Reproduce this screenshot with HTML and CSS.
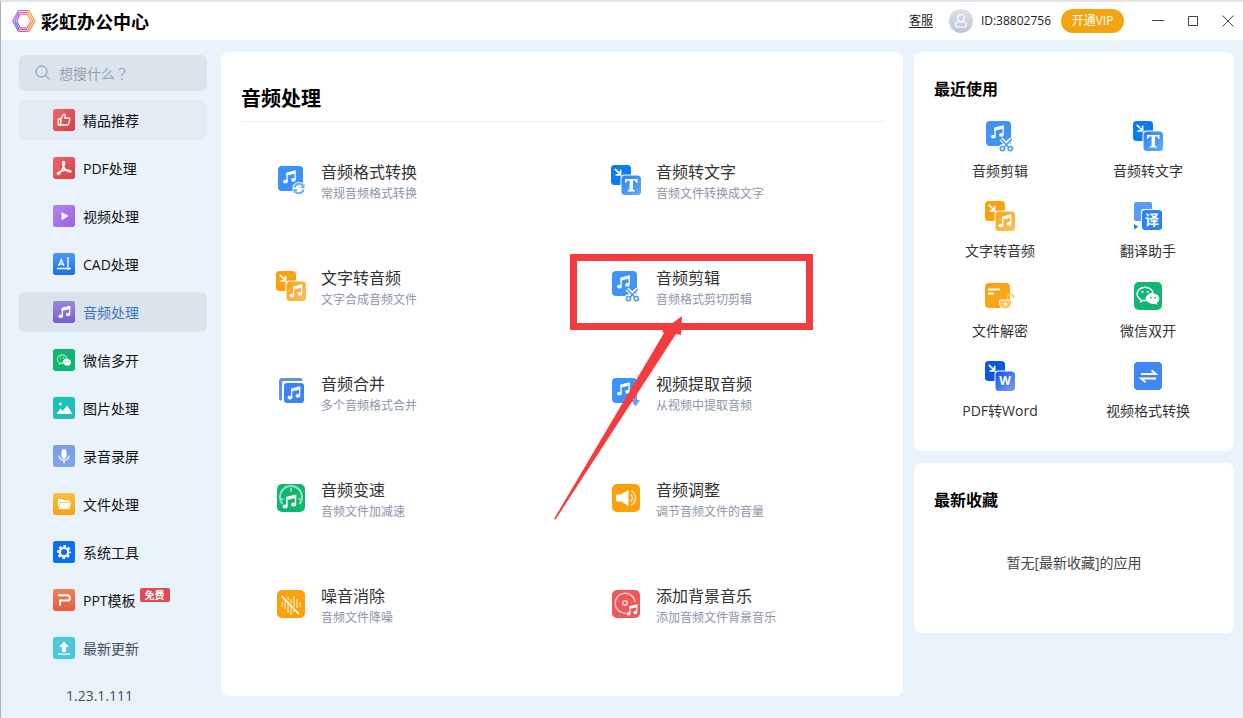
FILE: index.html
```html
<!DOCTYPE html>
<html lang="zh-CN">
<head>
<meta charset="utf-8">
<title>彩虹办公中心</title>
<link rel="stylesheet" href="styles.css">
</head>
<body>
<svg class="sprite" aria-hidden="true">
  <defs>
    <linearGradient id="g-red" x1="0" y1="0" x2="1" y2="1"><stop offset="0" stop-color="#ec6a6c"/><stop offset="1" stop-color="#d93c42"/></linearGradient>
    <linearGradient id="g-violet" x1="0" y1="0" x2="1" y2="1"><stop offset="0" stop-color="#b684f3"/><stop offset="1" stop-color="#9a63e2"/></linearGradient>
    <linearGradient id="g-blue" x1="0" y1="0" x2="0" y2="1"><stop offset="0" stop-color="#4d98f8"/><stop offset="1" stop-color="#1872e6"/></linearGradient>
    <linearGradient id="g-purple" x1="0" y1="0" x2="0" y2="1"><stop offset="0" stop-color="#9a85e4"/><stop offset="1" stop-color="#7a5fcb"/></linearGradient>
    <linearGradient id="g-teal" x1="0" y1="0" x2="0" y2="1"><stop offset="0" stop-color="#14c8b4"/><stop offset="1" stop-color="#2bb9bd"/></linearGradient>
    <linearGradient id="g-mic" x1="0" y1="0" x2="0" y2="1"><stop offset="0" stop-color="#7f9be6"/><stop offset="1" stop-color="#7aa7f0"/></linearGradient>
    <linearGradient id="g-folder" x1="0" y1="0" x2="0" y2="1"><stop offset="0" stop-color="#fcc23f"/><stop offset="1" stop-color="#f3a313"/></linearGradient>
    <linearGradient id="g-ppt" x1="0" y1="0" x2="0" y2="1"><stop offset="0" stop-color="#ee8257"/><stop offset="1" stop-color="#e2603f"/></linearGradient>
    <linearGradient id="g-front" x1="0" y1="0" x2="1" y2="1"><stop offset="0" stop-color="#2884f3"/><stop offset="1" stop-color="#68a8f8"/></linearGradient>
    <linearGradient id="g-orange" x1="0" y1="0" x2="1" y2="1"><stop offset="0" stop-color="#fba415"/><stop offset="1" stop-color="#fdbf5c"/></linearGradient>
    <linearGradient id="g-word" x1="0" y1="0" x2="1" y2="1"><stop offset="0" stop-color="#0f55e8"/><stop offset="1" stop-color="#7ba0f6"/></linearGradient>
    <linearGradient id="g-avatar" x1="0" y1="0" x2="0" y2="1"><stop offset="0" stop-color="#dde1ea"/><stop offset="1" stop-color="#bcc5d8"/></linearGradient>

    <symbol id="note" viewBox="0 0 14 14">
      <path d="M4.6 11.4V3.2l8-2v8.2" fill="none" stroke="currentColor" stroke-width="1.3"/>
      <path d="M4 2.8 13.2.5v3L4 5.8z" fill="currentColor"/>
      <ellipse cx="2.9" cy="11.6" rx="2.4" ry="1.9" fill="currentColor"/>
      <ellipse cx="10.9" cy="9.8" rx="2.4" ry="1.9" fill="currentColor"/>
    </symbol>
    <symbol id="inarrow" viewBox="0 0 8 8"><path d="m.8.8 5 5M6.6 1.8v5h-5" fill="none" stroke="#fff" stroke-width="1.7"/></symbol>
    <symbol id="chat" viewBox="0 0 24 20">
      <path d="M9 1.2c4.3 0 7.7 2.7 7.9 6.2-3.9.2-6.7 2.8-6.7 6 0 .5 0 .8.2 1.2-.9 0-2-.1-2.8-.3L4.5 16l.6-2.4C2.7 12.3 1 10.200 1 7.9 1 4.2 4.6 1.2 9 1.2z" fill="none" stroke="currentColor" stroke-width="1.4" stroke-linejoin="round"/>
      <circle cx="6.500" cy="5.800" r="1.100" fill="currentColor"/><circle cx="11.700" cy="5.800" r="1.100" fill="currentColor"/>
      <path d="M17 7.6c3.600 0 6.300 2.300 6.300 5.200 0 1.700-1 3.200-2.400 4.100l.4 2-2.200-1.200c-.7.2-1.400.3-2.100.3-3.600 0-6.400-2.300-6.400-5.200S13.400 7.600 17 7.600z" fill="currentColor"/>
      <circle cx="15" cy="11.600" r=".9" fill="#12b673"/><circle cx="19.200" cy="11.600" r=".9" fill="#12b673"/>
    </symbol>

    <symbol id="t-convert" viewBox="0 0 32 32">
      <rect x="3" y="2" width="25" height="25" rx="4" fill="#3a92fa"/>
      <use href="#note" x="7" y="6" width="15" height="14" color="#fff"/>
      <circle cx="24" cy="24.500" r="6.600" fill="#fff"/>
      <path d="M19.500 23.500a4.700 4.700 0 0 1 8-2.200M28.500 25.500a4.700 4.700 0 0 1-8 2.200" fill="none" stroke="#6aaafa" stroke-width="2"/>
      <path d="M29.500 19.500v4.500H25zM18.500 29.500V25H23z" fill="#6aaafa"/>
    </symbol>
    <symbol id="t-totext" viewBox="0 0 32 32">
      <rect x="1" y="1" width="20" height="20" rx="3.500" fill="#0a7cf2"/>
      <use href="#inarrow" x="4" y="4" width="8" height="8"/>
      <rect x="10.500" y="10.500" width="21" height="21" rx="4" fill="#fff"/>
      <rect x="11.500" y="11.500" width="19.500" height="19.500" rx="3.500" fill="url(#g-front)"/>
      <path d="M15 15h12.500v4h-1.200c-.3-1.900-.8-2.500-2.400-2.500h-1v8.600c0 1 .4 1.200 2 1.300v1h-7.300v-1c1.600-.1 2-.3 2-1.300v-8.600h-1c-1.600 0-2.100.6-2.400 2.500H15z" fill="#fff"/>
    </symbol>
    <symbol id="t-toaudio" viewBox="0 0 32 32">
      <rect x="1" y="1" width="20" height="20" rx="3.500" fill="#fba10c"/>
      <use href="#inarrow" x="4" y="4" width="8" height="8"/>
      <rect x="10.500" y="10.500" width="21" height="21" rx="4" fill="#fff"/>
      <rect x="11.500" y="11.500" width="19.500" height="19.500" rx="3.500" fill="url(#g-orange)"/>
      <use href="#note" x="14" y="14" width="14" height="14" color="#fff"/>
    </symbol>
    <symbol id="t-cut" viewBox="0 0 32 32">
      <rect x="2" y="1" width="25" height="25" rx="4" fill="#3f94f5"/>
      <use href="#note" x="6" y="5" width="15" height="14" color="#fff"/>
      <g fill="none" stroke="#fff" stroke-width="4"><path d="m17 19 9 8.500M27.500 19l-9 8.500"/><circle cx="18.500" cy="28.500" r="2.300"/><circle cx="26" cy="28.500" r="2.300"/></g>
      <g fill="none" stroke="#4a9bf7" stroke-width="1.600"><path d="m17 19 7.500 8M27.800 19l-7.500 8"/><circle cx="18.400" cy="28.600" r="2.100"/><circle cx="26.300" cy="28.600" r="2.100"/></g>
    </symbol>
    <symbol id="t-merge" viewBox="0 0 32 32">
      <path d="M4 23V5a3 3 0 0 1 3-3h18a2 2 0 0 1 2 3H9a2 2 0 0 0-2 2v17a2 2 0 0 1-3-1z" fill="#5a95f2"/>
      <rect x="9" y="7" width="20" height="20" rx="3" fill="#3a84f3"/>
      <use href="#note" x="12" y="10" width="14" height="14" color="#fff"/>
    </symbol>
    <symbol id="t-extract" viewBox="0 0 32 32">
      <rect x="2" y="2" width="25" height="25" rx="4" fill="#3a92fa"/>
      <use href="#note" x="6" y="6" width="15" height="14" color="#fff"/>
      <path d="M25.500 15v12M22 25l3.500 4 3.500-4" fill="none" stroke="#fff" stroke-width="5"/>
      <path d="M24 15h3v9h3l-4.500 6.500L21 24h3z" fill="#6a9ff2"/>
    </symbol>
    <symbol id="t-speed" viewBox="0 0 32 32">
      <rect x="2" y="2" width="28" height="28" rx="5" fill="#12b673"/>
      <path d="M7.500 22a11 11 0 1 1 17 0" fill="none" stroke="#8fe3c0" stroke-width="2"/>
      <path d="M16 6v4M5 17h4M23 17h4" stroke="#8fe3c0" stroke-width="1.500"/>
      <use href="#note" x="7" y="12" width="15" height="15" color="#fff"/>
    </symbol>
    <symbol id="t-volume" viewBox="0 0 32 32">
      <rect x="2" y="2" width="28" height="28" rx="5" fill="#fba10c"/>
      <path d="M7 12.500h4L18.500 8v16L11 19.500H7a1 1 0 0 1-1-1v-5a1 1 0 0 1 1-1z" fill="#fff"/>
      <path d="M20.500 12.500a4.200 4.200 0 0 1 0 7M21 8.600a8.400 8.400 0 0 1 0 14.800" fill="none" stroke="#ffe0a8" stroke-width="1.600"/>
    </symbol>
    <symbol id="t-noise" viewBox="0 0 32 32">
      <rect x="2" y="2" width="28" height="28" rx="5" fill="#fba10c"/>
      <path d="M7 14v5M10 12v9M13 9v16M16 11v16M19 8v16M22 11v9M25 14v5" stroke="#ffe0a0" stroke-width="1.500"/>
      <path d="m6 7 19 19" stroke="#fba10c" stroke-width="3"/><path d="m6.500 8 17.500 18" stroke="#fff" stroke-width="1.700"/>
    </symbol>
    <symbol id="t-bgm" viewBox="0 0 32 32">
      <rect x="2" y="2" width="28" height="28" rx="5" fill="#eb595c"/>
      <path d="M15.500 25.200A10 10 0 1 1 25 14" fill="none" stroke="#ffc5c5" stroke-width="1.500"/>
      <circle cx="15" cy="15" r="2.200" fill="none" stroke="#ffc5c5" stroke-width="1.800"/>
      <use href="#note" x="16" y="15.500" width="12" height="13" color="#fff"/>
    </symbol>
    <symbol id="t-translate" viewBox="0 0 32 32">
      <rect x="2" y="2" width="18" height="19" rx="2" fill="#5a9df7"/>
      <path d="m2 24 4.500 2.700L2 29.500z" fill="#2b80ee"/>
      <rect x="9" y="9" width="22" height="22" rx="3" fill="#fff"/>
      <rect x="10" y="10" width="20" height="20" rx="3" fill="#2c84f2"/>
      <text x="20" y="25" text-anchor="middle" class="glyph-cn">译</text>
    </symbol>
    <symbol id="t-decrypt" viewBox="0 0 32 32">
      <rect x="1" y="3" width="25" height="25" rx="4" fill="#fba415"/>
      <path d="M4 9.500h12M4 13.500h6" stroke="#fff" stroke-width="1.800"/>
      <path d="M15.500 20h12c.5 6-2 9-6 9s-6.500-3-6-9z" fill="#fdc566" stroke="#fff" stroke-width="1"/>
      <path d="M23.500 19.500v-2.200a3 3 0 0 1 6-.3v1" fill="none" stroke="#fdc566" stroke-width="1.600"/>
      <circle cx="21.500" cy="24" r="1.500" fill="#fff"/>
    </symbol>
    <symbol id="t-wechat" viewBox="0 0 32 32">
      <rect x="2" y="2" width="28" height="28" rx="5" fill="#12b673"/>
      <use href="#chat" x="4" y="6" width="24" height="20" color="#fff"/>
    </symbol>
    <symbol id="t-word" viewBox="0 0 32 32">
      <rect x="1" y="1" width="20" height="20" rx="3.500" fill="#0a58e4"/>
      <use href="#inarrow" x="4" y="4" width="8" height="8"/>
      <rect x="10.500" y="10.500" width="21" height="21" rx="4" fill="#fff"/>
      <rect x="11.500" y="11.500" width="19.500" height="19.500" rx="3.500" fill="url(#g-word)"/>
      <text x="21" y="25" text-anchor="middle" class="glyph-w">W</text>
    </symbol>
    <symbol id="t-swap" viewBox="0 0 32 32">
      <rect x="2" y="2" width="28" height="28" rx="4" fill="#3f87f5"/>
      <path d="M9 14h15l-4.500-3.700M24 18.500H9l4.500 3.700" fill="none" stroke="#fff" stroke-width="1.800"/>
    </symbol>

    <symbol id="n-like" viewBox="0 0 22 22"><rect width="22" height="22" rx="2.500" fill="url(#g-red)"/><path d="M5.300 10h2.500v6H5.300zM7.800 10l2.700-4.800c1.400-.2 2 .9 1.700 2L11.700 9h4c1 0 1.300.8 1.100 1.500l-1.200 4.600c-.2.6-.6.9-1.200.9H7.800" fill="none" stroke="#fff" stroke-width="1.300" stroke-linejoin="round"/></symbol>
    <symbol id="n-pdf" viewBox="0 0 22 22"><rect width="22" height="22" rx="2.500" fill="url(#g-red)"/><path d="M10.500 4.500c1.800 0 .6 4.500-1 7.500-1.300 2.500-3.500 5.500-4.700 5-1.500-.8 3.500-3.500 7-3.800 3-.3 6.200 0 6 1.300-.3 1.300-3.800-.2-5.800-2.500-1.800-2-3.200-7.500-1.500-7.500z" fill="none" stroke="#fff" stroke-width="1.600"/></symbol>
    <symbol id="n-video" viewBox="0 0 22 22"><rect width="22" height="22" rx="2.500" fill="url(#g-violet)"/><path d="m8.500 7 7 4-7 4.300z" fill="#fff"/></symbol>
    <symbol id="n-cad" viewBox="0 0 22 22"><rect width="22" height="22" rx="2.500" fill="url(#g-blue)"/><path d="m5.500 13 2.800-6.500L11 13M6.500 11h3.600M15 4v13M4 15.500h14" fill="none" stroke="#fff" stroke-width="1.300"/></symbol>
    <symbol id="n-audio" viewBox="0 0 22 22"><rect width="22" height="22" rx="2.500" fill="url(#g-purple)"/><use href="#note" x="5" y="4" width="13" height="14" color="#fff"/></symbol>
    <symbol id="n-wechat" viewBox="0 0 22 22"><rect width="22" height="22" rx="2.500" fill="#12b673"/><use href="#chat" x="3.500" y="5" width="15" height="13" color="#fff"/></symbol>
    <symbol id="n-image" viewBox="0 0 22 22"><rect width="22" height="22" rx="2.500" fill="url(#g-teal)"/><circle cx="7.500" cy="7" r="1.500" fill="#c8f5ef"/><path d="m3.500 17 4-5.500 2.300 2.500L14 8.500l5.500 8.500z" fill="#fff"/></symbol>
    <symbol id="n-mic" viewBox="0 0 22 22"><rect width="22" height="22" rx="2.500" fill="url(#g-mic)"/><rect x="8.500" y="4" width="5" height="9.500" rx="2.500" fill="#fff"/><path d="M6 10.500c0 6.300 10 6.300 10 0M11 15.500v3" fill="none" stroke="#fff" stroke-width="1.300"/></symbol>
    <symbol id="n-folder" viewBox="0 0 22 22"><rect width="22" height="22" rx="2.500" fill="url(#g-folder)"/><path d="M5 15V6h4.500l1.200 1.500h5.800V9H7.200zM7.800 9.800H18L16.200 16H5.500z" fill="#fff"/></symbol>
    <symbol id="n-gear" viewBox="0 0 22 22"><rect width="22" height="22" rx="2.500" fill="#0a6ff2"/><circle cx="11" cy="11" r="4.200" fill="none" stroke="#fff" stroke-width="2.200"/><circle cx="11" cy="11" r="6" fill="none" stroke="#fff" stroke-width="2" stroke-dasharray="2.700 2.012" stroke-dashoffset="1.350"/></symbol>
    <symbol id="n-ppt" viewBox="0 0 22 22"><rect width="22" height="22" rx="2.500" fill="url(#g-ppt)"/><path d="M5 6.300h9.500c3 0 3 5.200 0 5.200H7v5" fill="none" stroke="#fff" stroke-width="2"/></symbol>
    <symbol id="n-up" viewBox="0 0 22 22"><rect width="22" height="22" rx="2.500" fill="#4cc6da"/><path d="m11 4.500 5 5.500h-3v5H9v-5H6zM5 16.500h12v1.300H5z" fill="#fff"/></symbol>
  </defs>
</svg>

<div class="window">
  <header class="titlebar">
    <svg class="logo" viewBox="0 0 24 24" aria-hidden="true">
      <g fill="none" stroke-width="1.200">
        <path d="M6.500 1.500H17M7.200 3.300H16M8 5.100h7" stroke="#e8689a"/>
        <path d="M17 1.500 23 12M16 3.300 21 12M15 5.100 19 12" stroke="#f4a63c"/>
        <path d="m23 12-6 10.500M21 12l-5 8.700M19 12l-4 6.900" stroke="#ee8a4a"/>
        <path d="M17 22.500H6.500M16 20.700H7.200M15 18.900H8" stroke="#e0579a"/>
        <path d="M6.500 22.500.8 12M7.200 20.700 2.800 12M8 18.900 4.800 12" stroke="#7a62e0"/>
        <path d="M.8 12 6.500 1.500M2.800 12l4.400-8.700M4.800 12 8 5.100" stroke="#b462cf"/>
      </g>
    </svg>
    <h1 class="brand">彩虹办公中心</h1>
    <a class="service" href="#">客服</a>
    <svg class="avatar" viewBox="0 0 24 24" aria-hidden="true"><circle cx="12" cy="12" r="12" fill="url(#g-avatar)"/><circle cx="12" cy="9" r="3.300" fill="none" stroke="#fff" stroke-width="1.200"/><rect x="6.500" y="13" width="11" height="5" rx="2.500" fill="none" stroke="#fff" stroke-width="1.200"/></svg>
    <span class="uid">ID:38802756</span>
    <button class="vip" type="button">开通VIP</button>
    <div class="controls">
      <button class="control" type="button" aria-label="最小化"><svg viewBox="0 0 12 12"><path d="M0 5.500h12"/></svg></button>
      <button class="control" type="button" aria-label="最大化"><svg viewBox="0 0 12 12"><path d="M1.500 1.500h9v9h-9z"/></svg></button>
      <button class="control" type="button" aria-label="关闭"><svg viewBox="0 0 12 12"><path d="m.5.500 11 11M11.500.500l-11 11"/></svg></button>
    </div>
  </header>

  <div class="body">
    <aside class="sidebar">
      <label class="search">
        <svg viewBox="0 0 16 16" aria-hidden="true"><circle cx="6.500" cy="6.500" r="5.500"/><path d="m10.500 10.500 4.500 4"/></svg>
        <input type="text" placeholder="想搜什么？" aria-label="搜索" lang="zh-TW">
      </label>
      <nav class="nav">
        <a class="nav-item hover" href="#"><svg class="nav-icon"><use href="#n-like"/></svg>精品推荐</a>
        <a class="nav-item" href="#"><svg class="nav-icon"><use href="#n-pdf"/></svg>PDF处理</a>
        <a class="nav-item" href="#"><svg class="nav-icon"><use href="#n-video"/></svg>视频处理</a>
        <a class="nav-item" href="#"><svg class="nav-icon"><use href="#n-cad"/></svg>CAD处理</a>
        <a class="nav-item active" href="#" aria-current="page"><svg class="nav-icon"><use href="#n-audio"/></svg>音频处理</a>
        <a class="nav-item" href="#"><svg class="nav-icon"><use href="#n-wechat"/></svg>微信多开</a>
        <a class="nav-item" href="#"><svg class="nav-icon"><use href="#n-image"/></svg>图片处理</a>
        <a class="nav-item" href="#"><svg class="nav-icon"><use href="#n-mic"/></svg>录音录屏</a>
        <a class="nav-item" href="#"><svg class="nav-icon"><use href="#n-folder"/></svg>文件处理</a>
        <a class="nav-item" href="#"><svg class="nav-icon"><use href="#n-gear"/></svg>系统工具</a>
        <a class="nav-item" href="#"><svg class="nav-icon"><use href="#n-ppt"/></svg>PPT模板<span class="badge">免费</span></a>
        <a class="nav-item muted" href="#"><svg class="nav-icon"><use href="#n-up"/></svg>最新更新</a>
      </nav>
      <p class="version">1.23.1.111</p>
    </aside>

    <main class="panel tools-panel">
      <h2 class="panel-title">音频处理</h2>
      <div class="tools">
        <a class="tool" href="#"><svg class="tool-icon"><use href="#t-convert"/></svg><span class="tool-text"><b>音频格式转换</b><small>常规音频格式转换</small></span></a>
        <a class="tool" href="#"><svg class="tool-icon"><use href="#t-totext"/></svg><span class="tool-text"><b>音频转文字</b><small>音频文件转换成文字</small></span></a>
        <a class="tool" href="#"><svg class="tool-icon"><use href="#t-toaudio"/></svg><span class="tool-text"><b>文字转音频</b><small>文字合成音频文件</small></span></a>
        <a class="tool marked" href="#"><svg class="tool-icon"><use href="#t-cut"/></svg><span class="tool-text"><b>音频剪辑</b><small>音频格式剪切剪辑</small></span>
          <span class="mark-frame"></span>
          <svg class="mark-arrow" viewBox="0 0 136 208" aria-hidden="true"><path d="M1.500 207.500 0 207 110 21l-2-2L128 4l-1 19-5-1z"/></svg>
        </a>
        <a class="tool" href="#"><svg class="tool-icon"><use href="#t-merge"/></svg><span class="tool-text"><b>音频合并</b><small>多个音频格式合并</small></span></a>
        <a class="tool" href="#"><svg class="tool-icon"><use href="#t-extract"/></svg><span class="tool-text"><b>视频提取音频</b><small>从视频中提取音频</small></span></a>
        <a class="tool" href="#"><svg class="tool-icon"><use href="#t-speed"/></svg><span class="tool-text"><b>音频变速</b><small>音频文件加减速</small></span></a>
        <a class="tool" href="#"><svg class="tool-icon"><use href="#t-volume"/></svg><span class="tool-text"><b>音频调整</b><small>调节音频文件的音量</small></span></a>
        <a class="tool" href="#"><svg class="tool-icon"><use href="#t-noise"/></svg><span class="tool-text"><b>噪音消除</b><small>音频文件降噪</small></span></a>
        <a class="tool" href="#"><svg class="tool-icon"><use href="#t-bgm"/></svg><span class="tool-text"><b>添加背景音乐</b><small>添加音频文件背景音乐</small></span></a>
      </div>
    </main>

    <div class="side">
      <section class="panel recent">
        <h3 class="side-title">最近使用</h3>
        <div class="recent-grid">
          <a class="recent-item" href="#"><svg class="tool-icon"><use href="#t-cut"/></svg>音频剪辑</a>
          <a class="recent-item" href="#"><svg class="tool-icon"><use href="#t-totext"/></svg>音频转文字</a>
          <a class="recent-item" href="#"><svg class="tool-icon"><use href="#t-toaudio"/></svg>文字转音频</a>
          <a class="recent-item" href="#"><svg class="tool-icon"><use href="#t-translate"/></svg>翻译助手</a>
          <a class="recent-item" href="#"><svg class="tool-icon"><use href="#t-decrypt"/></svg>文件解密</a>
          <a class="recent-item" href="#"><svg class="tool-icon"><use href="#t-wechat"/></svg>微信双开</a>
          <a class="recent-item" href="#"><svg class="tool-icon"><use href="#t-word"/></svg>PDF转Word</a>
          <a class="recent-item" href="#"><svg class="tool-icon"><use href="#t-swap"/></svg>视频格式转换</a>
        </div>
      </section>
      <section class="panel favorites">
        <h3 class="side-title">最新收藏</h3>
        <p class="empty">暂无[最新收藏]的应用</p>
      </section>
    </div>
  </div>
</div>
</body>
</html>
```
FILE: styles.css
```css
* { box-sizing: border-box; }

body {
  margin: 0;
  background: #eaf2fb;
  color: #111;
  font: 14px/20px "Open Sans", "Noto Sans CJK SC", sans-serif;
}

a { color: inherit; text-decoration: none; }
button { border: 0; padding: 0; background: none; font: inherit; }
h1, h2, h3, p { margin: 0; }
svg { display: block; flex: none; }
.sprite { position: absolute; width: 0; height: 0; }
.glyph-cn { font: bold 14px "Noto Sans CJK SC", sans-serif; fill: #fff; }
.glyph-w { font: bold 12px "Open Sans", sans-serif; fill: #fff; }

.window {
  display: flex;
  flex-direction: column;
  min-height: 100vh;
  border-top: 2px solid #e2e4e6;
  border-left: 1px solid #a9b1bf;
}

.titlebar {
  display: flex;
  align-items: center;
  height: 38px;
  padding: 0 9px 0 11px;
  background: #fff;
  font-size: 12px;
}
.logo { width: 24px; height: 24px; }
.brand { margin-left: 5px; padding-top: 2px; font-size: 18px; line-height: 24px; color: #000; }
.service { margin-left: auto; text-decoration: underline; text-underline-offset: 2px; color: #222; }
.avatar { width: 24px; height: 24px; margin-left: 16px; }
.uid { margin-left: 8px; color: #222; }
.vip {
  min-width: 63px;
  height: 24px;
  margin-left: 10px;
  border-radius: 12px;
  background: #f2a50f;
  color: #fff;
}
.controls { display: flex; gap: 23px; margin-left: 28px; }
.control svg { width: 12px; height: 12px; fill: none; stroke: #444; stroke-width: 1; }

.body {
  flex: 1;
  display: flex;
  padding: 12px 9px 0 18px;
}

.sidebar { width: 188px; margin: 3px 14px 0 0; flex: none; }
.search {
  display: flex;
  align-items: center;
  gap: 8px;
  height: 36px;
  padding: 0 16px;
  border-radius: 6px;
  background: #d9e4ed;
}
.search svg { width: 16px; height: 16px; fill: none; stroke: #7d8b9a; stroke-width: 1; }
.search input {
  flex: 1;
  min-width: 0;
  padding: 0;
  border: 0;
  outline: 0;
  background: none;
  font: inherit;
  font-family: "Noto Sans CJK TC", sans-serif;
}
.search input::placeholder { color: #99a3ad; opacity: 1; }

.nav { display: grid; gap: 8px; margin-top: 9px; }
.nav-item {
  display: flex;
  align-items: center;
  height: 40px;
  padding: 2px 0 0 34px;
  border-radius: 6px;
}
.nav-icon { width: 22px; height: 22px; margin: 0 8px 2px 0; }
.nav-item.hover { background: #e3ebf5; }
.nav-item.active { background: #d9e4ed; color: #3f74c9; }
.nav-item.muted { color: #444e5a; }
.badge {
  align-self: flex-start;
  margin: 6px 0 0 4px;
  padding: 0 5px;
  border-radius: 2px;
  background: #e5484f;
  color: #fff;
  font-size: 10px;
  line-height: 14px;
  font-weight: 700;
}
.version { margin-top: 18px; padding-left: 47px; color: #4a4f57; }

.panel { background: #fff; border-radius: 8px; }
.tools-panel { flex: 1; margin-bottom: 22px; padding: 31px 6px 0; }
.panel-title {
  margin: 0 12px 5px 14px;
  padding-bottom: 6px;
  border-bottom: 1px solid #eef1f4;
  font-size: 20px;
  line-height: 32px;
  color: #000;
}
.tools { display: grid; grid-template-columns: 1fr 1fr; grid-auto-rows: 106px; }
.tool { display: flex; align-items: center; gap: 14px; padding-left: 48px; }
.tool-icon { width: 32px; height: 32px; }
.tool-text { display: grid; gap: 1px; padding-top: 4px; }
.tool-text b { font-size: 16px; line-height: 22px; font-weight: inherit; color: #333; }
.tool-text small { font-size: 12px; line-height: 20px; color: #8b95a8; }

.marked { position: relative; }
.mark-frame {
  position: absolute;
  left: 8px;
  top: 21px;
  width: 243px;
  height: 76px;
  border: 7px solid #f33c3f;
}
.mark-arrow {
  position: absolute;
  left: -8px;
  top: 79px;
  width: 136px;
  height: 208px;
  z-index: 1;
  fill: #f33c3f;
}

.side {
  display: grid;
  align-content: start;
  gap: 12px;
  width: 320px;
  margin-left: 11px;
  flex: none;
}
.side-title { padding-left: 8px; font-size: 16px; line-height: 24px; color: #000; }
.recent { padding: 25px 12px 15px; }
.recent-grid { display: grid; grid-template-columns: 1fr 1fr; grid-auto-rows: 80px; margin-top: 15px; }
.recent-item {
  display: flex;
  flex-direction: column;
  align-items: center;
  gap: 9px;
  padding-top: 4px;
  color: #333;
}
.favorites { min-height: 170px; padding: 25px 12px; }
.empty { margin-top: 41px; text-align: center; color: #444; }
```
